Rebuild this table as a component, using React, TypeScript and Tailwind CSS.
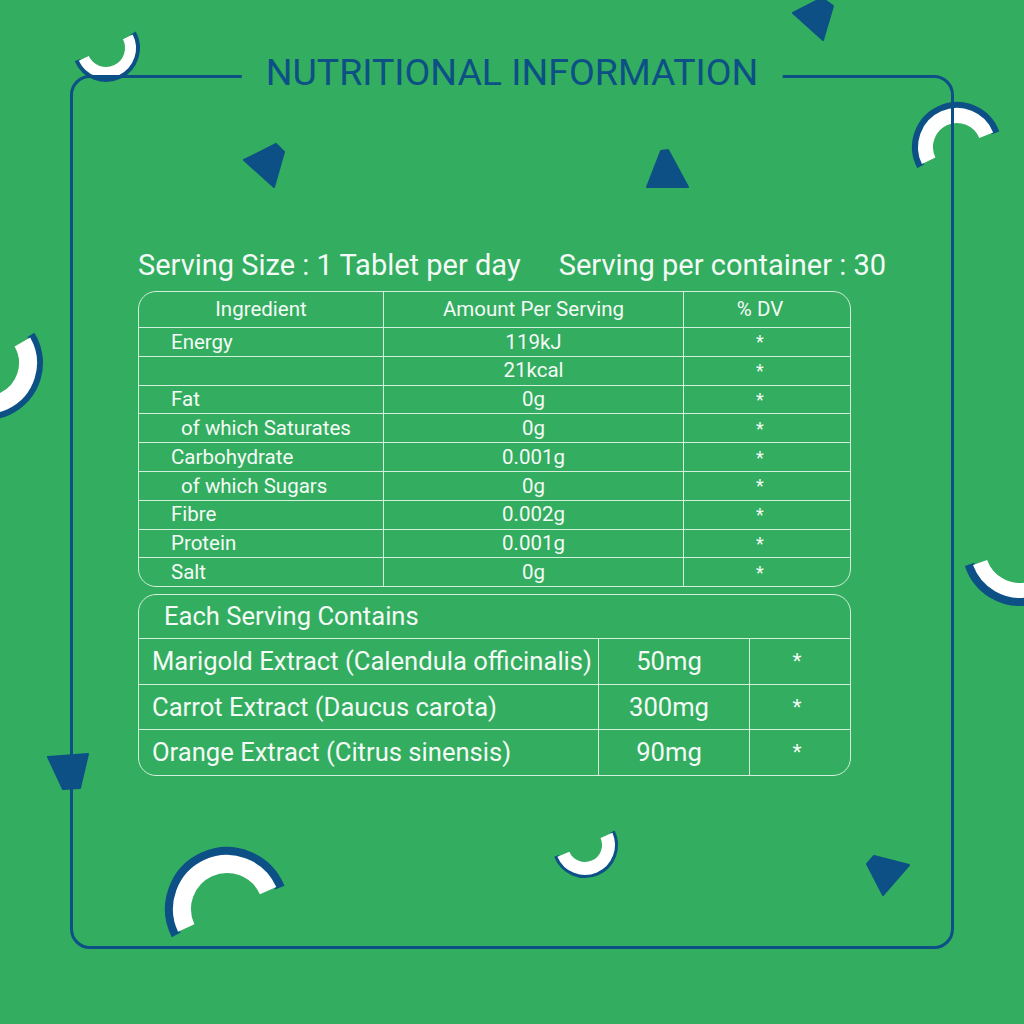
import React from 'react';

const BLUE = '#0c5086';

const facts = [
  { name: 'Energy', amount: '119kJ', sub: false },
  { name: '', amount: '21kcal', sub: false },
  { name: 'Fat', amount: '0g', sub: false },
  { name: 'of which Saturates', amount: '0g', sub: true },
  { name: 'Carbohydrate', amount: '0.001g', sub: false },
  { name: 'of which Sugars', amount: '0g', sub: true },
  { name: 'Fibre', amount: '0.002g', sub: false },
  { name: 'Protein', amount: '0.001g', sub: false },
  { name: 'Salt', amount: '0g', sub: false },
];

const extracts = [
  { name: 'Marigold Extract (Calendula officinalis)', amount: '50mg' },
  { name: 'Carrot Extract (Daucus carota)', amount: '300mg' },
  { name: 'Orange Extract (Citrus sinensis)', amount: '90mg' },
];

function arc(cx: number, cy: number, r: number, a0: number, a1: number) {
  const t0 = (a0 * Math.PI) / 180;
  const t1 = (a1 * Math.PI) / 180;
  const x0 = cx + r * Math.cos(t0);
  const y0 = cy + r * Math.sin(t0);
  const x1 = cx + r * Math.cos(t1);
  const y1 = cy + r * Math.sin(t1);
  const large = a1 - a0 > 180 ? 1 : 0;
  return `M ${x0} ${y0} A ${r} ${r} 0 ${large} 1 ${x1} ${y1}`;
}

type RingProps = { cx: number; cy: number; rIn: number; rOut: number; b: number; a0: number; a1: number };

function Ring({ cx, cy, rIn, rOut, b, a0, a1 }: RingProps) {
  // blue rim sits on the outer side, a touch longer than the white band
  const bIn = rOut - 2;
  const bOut = rOut + b;
  return (
    <g fill="none">
      <path d={arc(cx, cy, (bIn + bOut) / 2, a0 - 2, a1 + 2)} stroke={BLUE} strokeWidth={bOut - bIn} />
      <path d={arc(cx, cy, (rIn + rOut) / 2, a0, a1)} stroke="#ffffff" strokeWidth={rOut - rIn} />
    </g>
  );
}

function Decor() {
  const quads = [
    '244,160 276,144 284,152 274,187',
    '793,13 822,-2 833,6 823,40',
    '661,151 668,150 688,187 647,187',
    '48,757 88,754 80,788 63,789',
    '867,864 874,856 909,865 883,895',
  ];
  return (
    <svg className="absolute inset-0" width="1024" height="1024" viewBox="0 0 1024 1024">
      <Ring cx={106} cy={48} rIn={19} rOut={30} b={4} a0={-27} a1={155} />
      <Ring cx={957} cy={147} rIn={24} rOut={39} b={6} a0={154} a1={338} />
      <Ring cx={-14} cy={363} rIn={33} rOut={51} b={6} a0={-30} a1={160} />
      <Ring cx={1020} cy={548} rIn={35} rOut={50} b={8} a0={0} a1={160} />
      <Ring cx={227} cy={909} rIn={36} rOut={54} b={8} a0={155} a1={336} />
      <Ring cx={585} cy={845} rIn={17} rOut={30} b={3} a0={-24} a1={157} />
      {quads.map((p, i) => (
        <polygon key={i} points={p} fill={BLUE} stroke={BLUE} strokeWidth={2} strokeLinejoin="round" />
      ))}
    </svg>
  );
}

export default function App() {
  return (
    <div
      className="relative w-[1024px] h-[1024px] overflow-hidden bg-[#33ad5f] pt-[75px] pl-[70px] text-[#f4fbf6]"
      style={{ fontFamily: 'Roboto, "Noto Sans", sans-serif' }}
    >
      <Decor />

      {/* frame */}
      <div className="relative w-[884px] h-[874px] rounded-[20px] border-[3px] border-[#0c5086]">
        <div className="absolute left-1/2 top-[-6px] -translate-x-1/2 -translate-y-1/2 bg-[#33ad5f] px-6">
          <h1 className="text-[37.5px] leading-[42px] text-[#0c5086] whitespace-nowrap">NUTRITIONAL INFORMATION</h1>
        </div>

        <div className="pl-[65px] pt-[170px]">
          <div className="flex w-[748px] justify-between text-[29px] leading-[34px] whitespace-nowrap">
            <span>Serving Size : 1 Tablet per day</span>
            <span>Serving per container : 30</span>
          </div>

          {/* nutrition facts */}
          <div className="mt-[9px] w-[713px] rounded-[18px] border-[1.5px] border-[#d4efdb] overflow-hidden text-[20.5px]">
            <div className="flex h-[35px] items-center">
              <div className="w-[245px] h-full flex items-center justify-center border-r-[1.5px] border-[#d4efdb]">Ingredient</div>
              <div className="w-[300px] h-full flex items-center justify-center border-r-[1.5px] border-[#d4efdb]">Amount Per Serving</div>
              <div className="flex-1 h-full flex items-center justify-center pr-[14px]">% DV</div>
            </div>
            {facts.map((f, i) => (
              <div key={i} className="flex h-[28.8px] border-t-[1.5px] border-[#d4efdb]">
                <div className={`w-[245px] flex items-center border-r-[1.5px] border-[#d4efdb] ${f.sub ? 'pl-[42px]' : 'pl-[32px]'}`}>
                  {f.name}
                </div>
                <div className="w-[300px] flex items-center justify-center border-r-[1.5px] border-[#d4efdb]">{f.amount}</div>
                <div className="flex-1 flex items-center justify-center pr-[14px] text-[18px]">*</div>
              </div>
            ))}
          </div>

          {/* each serving */}
          <div className="mt-[7px] w-[713px] rounded-[18px] border-[1.5px] border-[#d4efdb] overflow-hidden text-[25.6px]">
            <div className="h-[43px] flex items-center pl-[25px]">Each Serving Contains</div>
            {extracts.map((e, i) => (
              <div key={i} className="flex h-[45.5px] border-t-[1.5px] border-[#d4efdb]">
                <div className="w-[460px] flex items-center pl-[13px] border-r-[1.5px] border-[#d4efdb] whitespace-nowrap">{e.name}</div>
                <div className="w-[151px] flex items-center justify-center pr-[10px] border-r-[1.5px] border-[#d4efdb]">{e.amount}</div>
                <div className="flex-1 flex items-start justify-center pt-[7px] pr-[6px] text-[21px]">*</div>
              </div>
            ))}
          </div>
        </div>
      </div>
    </div>
  );
}
